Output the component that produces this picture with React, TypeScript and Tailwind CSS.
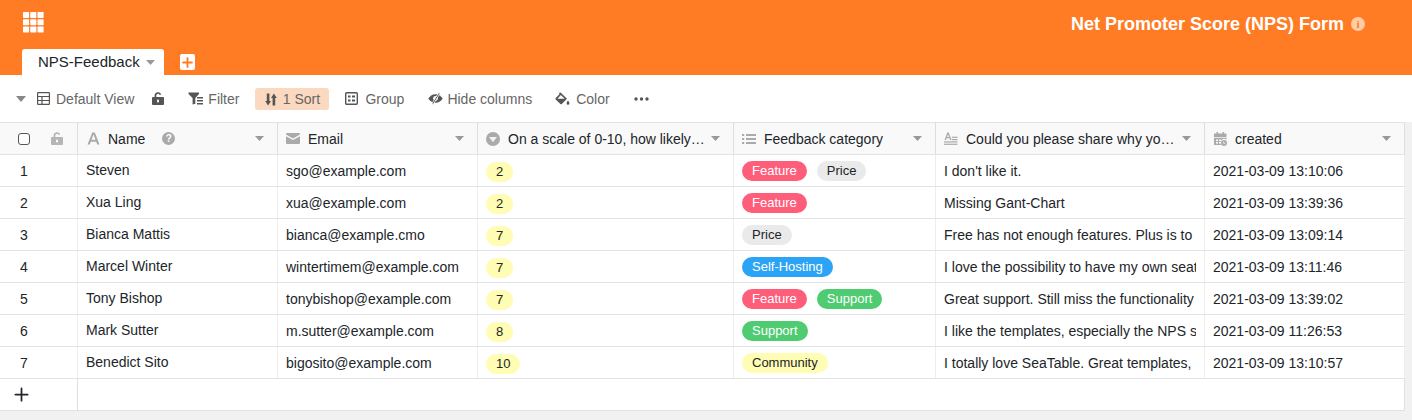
import { Plus } from "lucide-react";

type Tag = { label: string; className: string };

const feature = { label: "Feature", className: "bg-[#ff5e7b] text-white" };
const price = { label: "Price", className: "bg-[#eaeaea] text-[#212529]" };
const selfHosting = { label: "Self-Hosting", className: "bg-[#2ca4f5] text-white" };
const support = { label: "Support", className: "bg-[#4fcb72] text-white" };
const community = { label: "Community", className: "bg-[#fffcb3] text-[#212529]" };

const rows: {
  name: string;
  email: string;
  score: string;
  tags: Tag[];
  reason: string;
  created: string;
}[] = [
  { name: "Steven", email: "sgo@example.com", score: "2", tags: [feature, price], reason: "I don't like it.", created: "2021-03-09 13:10:06" },
  { name: "Xua Ling", email: "xua@example.com", score: "2", tags: [feature], reason: "Missing Gant-Chart", created: "2021-03-09 13:39:36" },
  { name: "Bianca Mattis", email: "bianca@example.cmo", score: "7", tags: [price], reason: "Free has not enough features. Plus is to expensive.", created: "2021-03-09 13:09:14" },
  { name: "Marcel Winter", email: "wintertimem@example.com", score: "7", tags: [selfHosting], reason: "I love the possibility to have my own seatable server.", created: "2021-03-09 13:11:46" },
  { name: "Tony Bishop", email: "tonybishop@example.com", score: "7", tags: [feature, support], reason: "Great support. Still miss the functionality to do more.", created: "2021-03-09 13:39:02" },
  { name: "Mark Sutter", email: "m.sutter@example.com", score: "8", tags: [support], reason: "I like the templates, especially the NPS survey one.", created: "2021-03-09 11:26:53" },
  { name: "Benedict Sito", email: "bigosito@example.com", score: "10", tags: [community], reason: "I totally love SeaTable. Great templates,", created: "2021-03-09 13:10:57" },
];

function Caret({ className }: { className: string }) {
  return (
    <svg viewBox="0.5 0.5 9 5" preserveAspectRatio="none" className={className}>
      <path d="M0.5 0.5h9L5 5.5z" fill="currentColor" />
    </svg>
  );
}

function AppsIcon() {
  return (
    <svg width="21" height="21" viewBox="0 0 22 22" fill="#fff">
      {[0, 7.6, 15.2].map((y) =>
        [0, 7.6, 15.2].map((x) => <rect key={`${x}-${y}`} x={x} y={y} width="6.4" height="6.4" rx="0.8" />),
      )}
    </svg>
  );
}

function LockIcon({ color }: { color: string }) {
  return (
    <svg width="12" height="13" viewBox="0 0 12 13" fill={color}>
      <path d="M2.6 5V3.6a3.4 3.4 0 0 1 6.6-1.1l-1.6.5A1.7 1.7 0 0 0 4.3 3.6V5H11a1 1 0 0 1 1 1v6a1 1 0 0 1-1 1H1a1 1 0 0 1-1-1V6a1 1 0 0 1 1-1z" />
      <rect x="5" y="7.6" width="2" height="3" rx="1" fill="#fff" />
    </svg>
  );
}

function TableIcon() {
  return (
    <svg width="13" height="13" viewBox="0 0 13 13" fill="none" stroke="#555" strokeWidth="1.2">
      <rect x="0.6" y="0.6" width="11.8" height="11.8" rx="0.6" />
      <path d="M0.6 4.5h11.8M0.6 8.5h11.8M5 4.5v7.9" />
    </svg>
  );
}

function FilterIcon() {
  return (
    <svg width="16" height="13" viewBox="0 0 16 13" fill="#555">
      <path d="M0.5 0.5h10.5v1.4L7.3 6v5.8L4.6 12.6V6L0.5 1.9z" />
      <rect x="9" y="5" width="6" height="1.5" />
      <rect x="9" y="8" width="6" height="1.5" />
      <rect x="9" y="11" width="6" height="1.5" />
    </svg>
  );
}

function SortIcon() {
  return (
    <svg width="12" height="13" viewBox="0 0 12 13" fill="#555">
      <path d="M1.800 0.500h2.600v7.500H6L3.100 12.500 0.200 8H1.800z" />
      <path d="M7.600 12.500h2.600V5h1.600L8.900 0.500 6 5h1.600z" />
    </svg>
  );
}

function GroupIcon() {
  return (
    <svg width="13" height="13" viewBox="0 0 13 13" fill="none" stroke="#555" strokeWidth="1.4">
      <rect x="0.7" y="0.7" width="11.6" height="11.6" rx="1" />
      <path d="M3 4.600h2.500M7 4.600h3M3 8.400h2.500M7 8.400h3" strokeWidth="2" />
    </svg>
  );
}

function EyeOffIcon() {
  return (
    <svg width="15" height="13" viewBox="0 0 15 13" fill="#555">
      <path d="M7.500 2.200c3.200 0 5.800 2 7.200 4.300-1.400 2.300-4 4.300-7.200 4.300S1.700 8.800.3 6.500C1.700 4.200 4.300 2.200 7.500 2.200z" />
      <circle cx="7.500" cy="6.500" r="2.400" fill="#fff" />
      <path d="M10.800 0.600l1.300.8-6.900 11-1.300-.8z" stroke="#fff" strokeWidth="0.8" />
    </svg>
  );
}

function BucketIcon() {
  return (
    <svg width="15" height="14" viewBox="0 0 15 14" fill="#555">
      <path d="M5.500 0.500l6.500 6.300-5.200 5.200a1 1 0 0 1-1.400 0L.700 7.500a1 1 0 0 1 0-1.400l4-4-1-1z" />
      <path d="M2.500 6.800h7.200L5.800 3z" fill="#fff" />
      <path d="M13 8.600c.8 1.200 1.400 2 1.400 2.800a1.400 1.400 0 0 1-2.800 0c0-.8.600-1.600 1.400-2.800z" />
    </svg>
  );
}

const headerIcon = "#aaa";

function TextIcon() {
  return (
    <svg width="13" height="13" viewBox="0 0 13 13" fill={headerIcon}>
      <path d="M5.200 0.500h2.600l4.700 12h-2.300l-1-2.800H3.800l-1 2.800H.500zM4.500 7.800h4L6.500 2.600z" />
    </svg>
  );
}

function HelpIcon() {
  return (
    <span className="flex h-[13px] w-[13px] items-center justify-center rounded-full bg-[#aaaaaa] text-[10px] leading-none font-bold text-white">
      ?
    </span>
  );
}

function MailIcon() {
  return (
    <svg width="14" height="11" viewBox="0 0 14 11" fill={headerIcon}>
      <path d="M1 0h12a1 1 0 0 1 1 1v.6L7 5.500 0 1.600V1a1 1 0 0 1 1-1z" />
      <path d="M0 3.200l7 3.900 7-3.900V10a1 1 0 0 1-1 1H1a1 1 0 0 1-1-1z" />
    </svg>
  );
}

function SelectIcon() {
  return (
    <svg width="14" height="14" viewBox="0 0 14 14">
      <circle cx="7" cy="7" r="7" fill={headerIcon} />
      <path d="M3 5h8L7 10.200z" fill="#f2f2f2" />
    </svg>
  );
}

function ListIcon() {
  return (
    <svg width="14" height="12" viewBox="0 0 14 12" fill={headerIcon}>
      <rect x="0" y="1" width="2.200" height="2" />
      <rect x="4" y="1" width="10" height="2" />
      <rect x="0" y="5" width="2.200" height="2" />
      <rect x="4" y="5" width="10" height="2" />
      <rect x="0" y="9" width="2.200" height="2" />
      <rect x="4" y="9" width="10" height="2" />
    </svg>
  );
}

function LongTextIcon() {
  return (
    <svg width="15" height="14" viewBox="0 0 15 14" fill={headerIcon}>
      <path d="M3.500 0h1.600l3 8H6.500l-.6-1.800H2.800L2.200 8H.600zM3.300 4.900h2.100L4.300 1.900z" />
      <rect x="8.500" y="4.500" width="6" height="1.300" />
      <rect x="8.500" y="7" width="6" height="1.300" />
      <rect x="0" y="9.500" width="14.500" height="1.300" />
      <rect x="0" y="12" width="14.500" height="1.300" />
    </svg>
  );
}

function CalendarIcon() {
  return (
    <svg width="13" height="14" viewBox="0 0 13 14" fill={headerIcon}>
      <rect x="2.500" y="0" width="1.600" height="2.500" />
      <rect x="8.500" y="0" width="1.600" height="2.500" />
      <path d="M0 1.500h12.500v3.500H0z" />
      <path d="M0 5.800h12.500v2a3.500 3.500 0 0 0-4.800 5.200H0z" />
      <rect x="2" y="7.500" width="2" height="1.600" fill="#f9f9f9" />
      <rect x="5" y="7.500" width="2" height="1.600" fill="#f9f9f9" />
      <rect x="2" y="10" width="2" height="1.600" fill="#f9f9f9" />
      <rect x="5" y="10" width="2" height="1.600" fill="#f9f9f9" />
      <circle cx="10" cy="11" r="3" />
      <path d="M9.700 9.500v1.800h1.500" stroke="#f9f9f9" strokeWidth="0.8" fill="none" />
    </svg>
  );
}

function ToolButton({ icon, label, gap = "gap-[6px]" }: { icon: React.ReactNode; label: string; gap?: string }) {
  return (
    <div className={`flex items-center ${gap} text-[14px] text-[#666666]`}>
      {icon}
      <span className="pt-[2px]">{label}</span>
    </div>
  );
}

function HeaderCell({
  icon,
  label,
  width,
  help,
}: {
  icon: React.ReactNode;
  label: string;
  width: string;
  help?: boolean;
}) {
  return (
    <div className={`flex h-full shrink-0 items-center border-r border-[#dedede] pr-[13px] pl-[8px] ${width}`}>
      <span className="flex w-[14px] shrink-0 justify-center">{icon}</span>
      <span className="ml-[8px] truncate pt-[2px] text-[14px] text-[#212529]">{label}</span>
      {help ? (
        <span className="ml-[17px]">
          <HelpIcon />
        </span>
      ) : null}
      <Caret className="ml-auto h-[5px] w-[9px] shrink-0 text-[#999999]" />
    </div>
  );
}

export default function App() {
  return (
    <div className="flex h-[420px] w-[1412px] flex-col overflow-hidden bg-[#f1f1f1] font-['Liberation_Sans',Arial,sans-serif]">
      <header className="h-[75px] shrink-0 bg-[#ff7c24]">
        <div className="flex h-[49px] items-start justify-between">
          <div className="mt-[12px] ml-[23px]">
            <AppsIcon />
          </div>
          <div className="mt-[14px] mr-[47px] flex items-center gap-[7px]">
            <span className="text-[18px] leading-[20px] font-bold text-white">Net Promoter Score (NPS) Form</span>
            <span className="flex h-[14px] w-[14px] items-center justify-center rounded-full bg-[#ffcca3] font-['Liberation_Serif',serif] text-[11px] leading-none font-bold text-[#ff7c24]">
              i
            </span>
          </div>
        </div>
        <div className="flex items-start">
          <div className="ml-[22px] flex h-[26px] w-[142px] items-center rounded-t-[3px] bg-white pl-[16px]">
            <span className="text-[15px] text-[#212529]">NPS-Feedback</span>
            <Caret className="ml-[6px] h-[5px] w-[9px] text-[#999999]" />
          </div>
          <div className="mt-[5px] ml-[16px] flex h-[16px] w-[15px] items-center justify-center rounded-[2px] bg-white">
            <Plus size={15} strokeWidth={3} color="#ff7c24" />
          </div>
        </div>
      </header>

      <div className="flex h-[47px] shrink-0 items-center bg-white pl-[16px]">
        <Caret className="mr-[11px] h-[6px] w-[10px] text-[#888888]" />
        <ToolButton icon={<TableIcon />} label="Default View" gap="gap-[6px]" />
        <span className="ml-[18px]">
          <LockIcon color="#555" />
        </span>
        <span className="ml-[24px]">
          <ToolButton icon={<FilterIcon />} label="Filter" gap="gap-[4px]" />
        </span>
        <div className="mt-[1px] ml-[16px] flex h-[22px] w-[74px] items-center justify-center gap-[6px] rounded-[3px] bg-[#fbd9c0] text-[14px] text-[#666666]">
          <SortIcon />
          <span className="pt-[1px]">1 Sort</span>
        </div>
        <span className="ml-[16px]">
          <ToolButton icon={<GroupIcon />} label="Group" gap="gap-[7px]" />
        </span>
        <span className="ml-[24px]">
          <ToolButton icon={<EyeOffIcon />} label="Hide columns" gap="gap-[4px]" />
        </span>
        <span className="ml-[23px]">
          <ToolButton icon={<BucketIcon />} label="Color" />
        </span>
        <svg width="15" height="4" viewBox="0 0 15 4" fill="#555" className="ml-[24px]">
          <circle cx="2" cy="2" r="1.700" />
          <circle cx="7.500" cy="2" r="1.700" />
          <circle cx="13" cy="2" r="1.700" />
        </svg>
      </div>

      <div className="box-border flex h-[33px] w-[1405px] shrink-0 items-stretch border-y border-[#e3e3e3] bg-[#f9f9f9]">
        <div className="flex h-full w-[78px] shrink-0 items-center border-r border-[#dedede]">
          <span className="ml-[18px] h-[12px] w-[12px] rounded-[3px] border border-[#555555] bg-white" />
          <span className="ml-[21px]">
            <LockIcon color="#b5b5b5" />
          </span>
        </div>
        <HeaderCell icon={<TextIcon />} label="Name" width="w-[200px]" help />
        <HeaderCell icon={<MailIcon />} label="Email" width="w-[200px]" />
        <HeaderCell icon={<SelectIcon />} label="On a scale of 0-10, how likely…" width="w-[256px]" />
        <HeaderCell icon={<ListIcon />} label="Feedback category" width="w-[202px]" />
        <HeaderCell icon={<LongTextIcon />} label="Could you please share why yo…" width="w-[269px]" />
        <HeaderCell icon={<CalendarIcon />} label="created" width="w-[200px]" />
      </div>

      <div className="w-[1405px] bg-white">
        {rows.map((row, i) => (
          <div key={row.name} className="flex h-[32px] border-b border-[#e3e3e3] text-[14px] text-[#212529]">
            <div className="flex w-[78px] shrink-0 items-center border-r border-[#eeeeee] pt-[2px] pl-[20px]">{i + 1}</div>
            <div className="flex w-[200px] shrink-0 items-center border-r border-[#eeeeee] px-[8px]">{row.name}</div>
            <div className="flex w-[200px] shrink-0 items-center border-r border-[#eeeeee] px-[8px] pt-[2px]">{row.email}</div>
            <div className="flex w-[256px] shrink-0 items-start border-r border-[#eeeeee] px-[8px] pt-[7px]">
              <span className="flex h-[20px] min-w-[27px] items-center justify-center rounded-full bg-[#fffcb3] px-[10px] text-[13px]">
                {row.score}
              </span>
            </div>
            <div className="flex w-[202px] shrink-0 items-start gap-[10px] border-r border-[#eeeeee] px-[8px] pt-[6px]">
              {row.tags.map((tag) => (
                <span
                  key={tag.label}
                  className={`flex h-[20px] items-center rounded-full px-[10px] text-[13px] ${tag.className}`}
                >
                  {tag.label}
                </span>
              ))}
            </div>
            <div className="flex w-[269px] shrink-0 items-center overflow-hidden border-r border-[#eeeeee] px-[8px] pt-[2px]">
              <span className="overflow-hidden whitespace-nowrap">{row.reason}</span>
            </div>
            <div className="flex w-[200px] shrink-0 items-center border-r border-[#eeeeee] px-[8px] pt-[2px]">{row.created}</div>
          </div>
        ))}
        <div className="flex h-[32px] border-r border-b border-[#e0e0e0]">
          <div className="flex w-[78px] shrink-0 items-center border-r border-[#dedede] pl-[11px]">
            <Plus size={21} strokeWidth={2} color="#212529" />
          </div>
        </div>
      </div>
    </div>
  );
}
